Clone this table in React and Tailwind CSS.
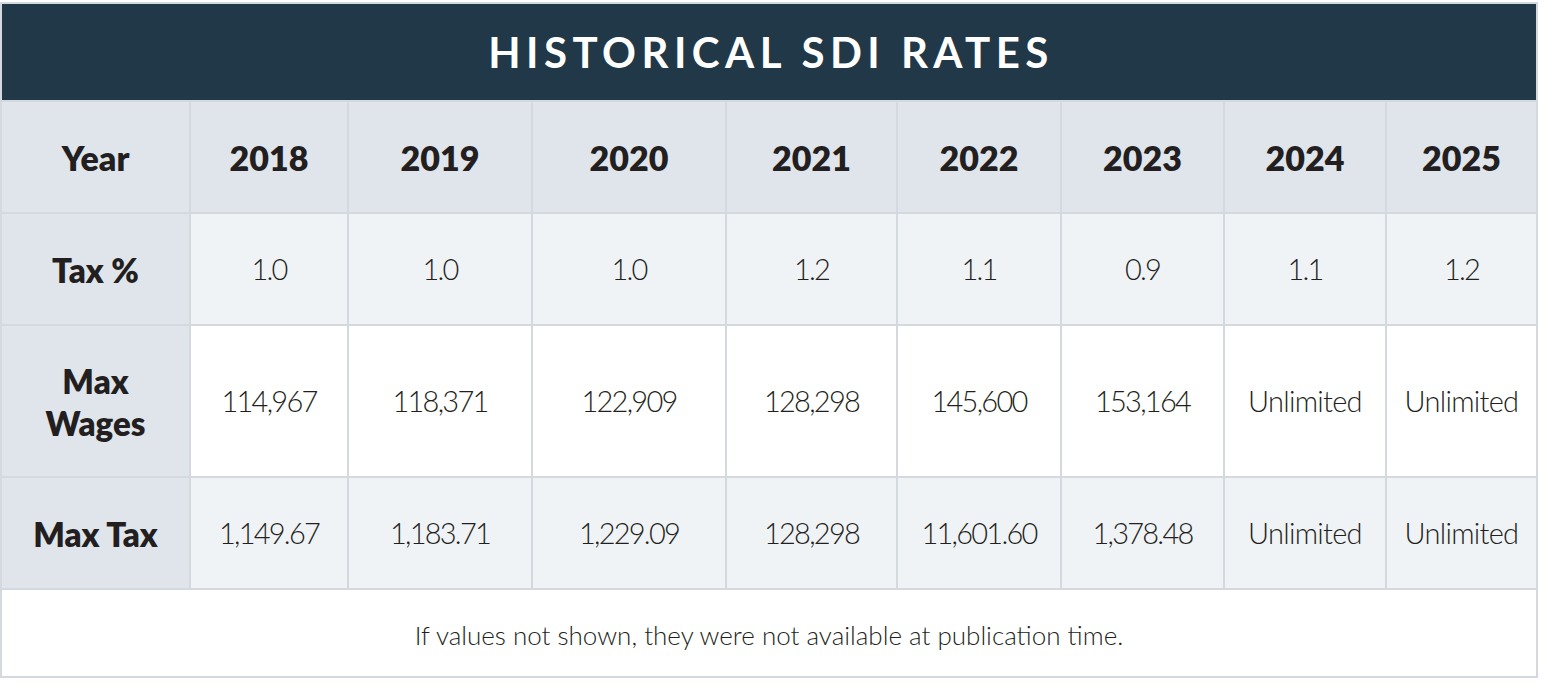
const years = ['2018', '2019', '2020', '2021', '2022', '2023', '2024', '2025']

const rows = [
  {
    label: ['Tax %'],
    values: ['1.0', '1.0', '1.0', '1.2', '1.1', '0.9', '1.1', '1.2'],
    bg: 'bg-[#f0f3f6]',
    h: 'h-[110px]',
  },
  {
    label: ['Max', 'Wages'],
    values: ['114,967', '118,371', '122,909', '128,298', '145,600', '153,164', 'Unlimited', 'Unlimited'],
    bg: 'bg-white',
    h: 'h-[150px]',
  },
  {
    label: ['Max Tax'],
    values: ['1,149.67', '1,183.71', '1,229.09', '128,298', '11,601.60', '1,378.48', 'Unlimited', 'Unlimited'],
    bg: 'bg-[#f0f3f6]',
    h: 'h-[110px]',
  },
]

export default function App() {
  return (
    <div className="w-[1548px] h-[696px] bg-white pt-[2px] font-['Lato',sans-serif] text-[#231f20]">
      <div className="w-[1538px] border-2 border-[#d3d9df] bg-[#d3d9df] flex flex-col gap-[2px]">
        {/* Title bar */}
        <div className="h-[96px] bg-[#213848] flex items-center justify-center">
          <h1 className="text-white text-[42px] font-bold tracking-[0.13em] leading-none pl-[4px]">
            HISTORICAL SDI RATES
          </h1>
        </div>

        {/* Table */}
        <div className="grid grid-cols-[187px_156px_182px_192px_169px_162px_161px_160px_149px] gap-[2px]">
          <div className="h-[110px] bg-[#dfe5eb] flex items-center justify-center text-[34px] font-extrabold">
            Year
          </div>
          {years.map((y) => (
            <div key={y} className="h-[110px] bg-[#dfe5eb] flex items-center justify-center text-[34px] font-extrabold">
              {y}
            </div>
          ))}

          {rows.map((row) =>
            [
              <div
                key={row.label.join()}
                className={`${row.h} bg-[#dfe5eb] flex flex-col items-center justify-center text-[33px] font-extrabold leading-[42px] pt-[2px]`}
              >
                {row.label.map((l) => (
                  <span key={l}>{l}</span>
                ))}
              </div>,
              ...row.values.map((v, i) => (
                <div
                  key={row.label.join() + i}
                  className={`${row.h} ${row.bg} flex items-center justify-center text-[29px] font-light ${
                    v === 'Unlimited' ? 'tracking-[-0.025em]' : 'tracking-[-0.06em]'
                  }`}
                >
                  {v}
                </div>
              )),
            ]
          )}
        </div>

        {/* Footnote */}
        <div className="h-[86px] bg-white flex items-center justify-center pt-[4px]">
          <p className="text-[26px] font-light">
            If values not shown, they were not available at publication time.
          </p>
        </div>
      </div>
    </div>
  )
}
